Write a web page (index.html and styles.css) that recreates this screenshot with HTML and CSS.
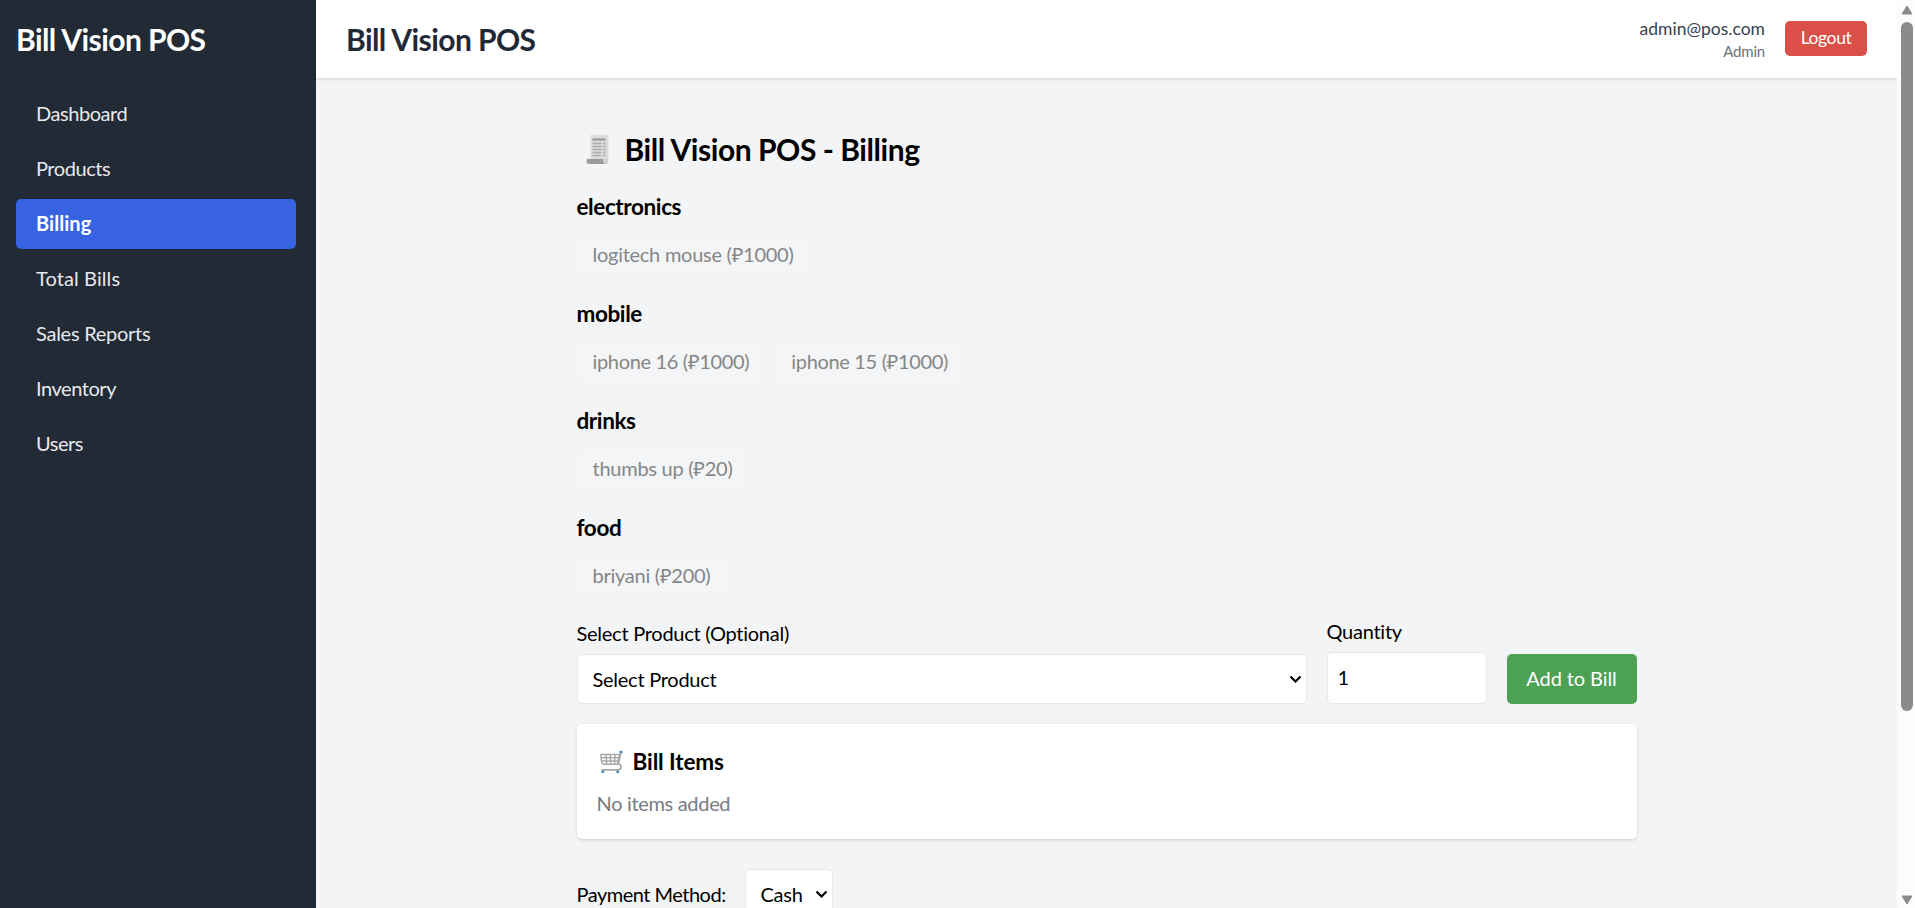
FILE: index.html
```html
<!DOCTYPE html>
<html lang="en">
<head>
<meta charset="utf-8">
<title>Bill Vision POS</title>
<link rel="stylesheet" href="styles.css">
</head>
<body>
<div class="app">
  <aside class="sidebar">
    <div class="brand">Bill Vision POS</div>
    <nav class="nav">
      <a class="tight">Dashboard</a>
      <a class="tight">Products</a>
      <a class="active">Billing</a>
      <a class="loose">Total Bills</a>
      <a>Sales Reports</a>
      <a class="tight">Inventory</a>
      <a class="tight">Users</a>
    </nav>
  </aside>
  <div class="page">
    <header class="topbar">
      <div class="title">Bill Vision POS</div>
      <div class="account">
        <div class="who"><div class="email">admin@pos.com</div><div class="role">Admin</div></div>
        <button class="logout">Logout</button>
      </div>
    </header>
    <main class="content">
      <h1 class="heading">
        <svg class="receipt" width="24" height="31" viewBox="0 0 24 31">
          <path d="M4.500 1.500l1.500-1 1.500 1 1.500-1 1.500 1 1.500-1 1.500 1 1.500-1 1.500 1 1.500-1 1.500 1 1.500-1 1.500 1V28q0 2-2.500 2H4.500z" fill="#dcdcdc"/>
          <path d="M6.500 5.500h13" stroke="#999" stroke-width="2.200"/>
          <path d="M6.500 9.500h9M17 9.500h2.500M6.500 12.500h9M17 12.500h2.500M6.500 15.500h9M17 15.500h2.500M6.500 18.500h9M17 18.500h2.500M6.500 21.500h9M17 21.500h2.500" stroke="#aaa" stroke-width="1.300"/>
          <path d="M1 25h16.500q-1.500 2.500 1.500 5H3Q.5 30 .5 27z" fill="#9b9b9b"/>
          <path d="M17.500 25h4.500v3q0 2-2 2-3-1-2.500-5z" fill="#cfcfcf"/>
        </svg>
        <span>Bill Vision POS - Billing</span>
      </h1>
      <section class="category"><h2>electronics</h2><div class="pills"><button class="pill">logitech mouse (₽1000)</button></div></section>
      <section class="category"><h2>mobile</h2><div class="pills"><button class="pill phone">iphone 16 (₽1000)</button><button class="pill phone">iphone 15 (₽1000)</button></div></section>
      <section class="category"><h2>drinks</h2><div class="pills"><button class="pill">thumbs up (₽20)</button></div></section>
      <section class="category"><h2>food</h2><div class="pills"><button class="pill">briyani (₽200)</button></div></section>
      <div class="form">
        <div class="field product">
          <label>Select Product (Optional)</label>
          <div class="control select"><span>Select Product</span><svg width="13" height="9" viewBox="0 0 13 9"><path d="M1.500 1.500l5 5 5-5" fill="none" stroke="#000" stroke-width="2.200"/></svg></div>
        </div>
        <div class="field quantity">
          <label>Quantity</label>
          <div class="control number">1</div>
        </div>
        <button class="add">Add to Bill</button>
      </div>
      <section class="card">
        <h2 class="card-title">
          <svg width="25" height="24" viewBox="0 0 25 24" fill="none">
            <path d="M2 4.500h18.500l-2.200 9.700H4.500q-1.500 0-1.700-1.500L1.800 6q-.1-1.500.2-1.500zM2.500 7.700h17.500M3 11h16.500M6.800 4.500l1 9.700M11.300 4.500l.5 9.700M16 4.500l-.4 9.700" stroke="#a9a9a9" stroke-width="1.400"/>
            <path d="M22 2.500L19.300 14.200q3 .2 2.700 2.600 0 3-3 3H2.500" stroke="#a9a9a9" stroke-width="1.700"/>
            <path d="M20.500 2h3" stroke="#4387bd" stroke-width="2.200"/>
            <path d="M3.800 20.500v2.500M18.800 20.500v2.500" stroke="#4387bd" stroke-width="2.600"/>
          </svg>
          <span>Bill Items</span>
        </h2>
        <p class="empty">No items added</p>
      </section>
      <div class="payment">
        <label>Payment Method:</label>
        <div class="control select cash"><span>Cash</span><svg width="13" height="9" viewBox="0 0 13 9"><path d="M1.500 1.500l5 5 5-5" fill="none" stroke="#000" stroke-width="2.200"/></svg></div>
      </div>
    </main>
  </div>
  <div class="scrollbar">
    <svg width="12" height="10" viewBox="0 0 12 10"><path d="M6 1L11 9H1z" fill="#8b8b8b" stroke="#8b8b8b" stroke-linejoin="round"/></svg>
    <div class="track"><div class="thumb"></div></div>
    <svg width="12" height="10" viewBox="0 0 12 10"><path d="M6 9L1 1h10z" fill="#8b8b8b" stroke="#8b8b8b" stroke-linejoin="round"/></svg>
  </div>
</div>
</body>
</html>
```
FILE: styles.css
```css
* { box-sizing: border-box; margin: 0; padding: 0; }
body { font-family: Lato, "Noto Sans", sans-serif; font-size: 20px; letter-spacing: -.26px; color: #000; overflow: hidden; }
button { font: inherit; letter-spacing: inherit; border: 0; padding-bottom: 2px; }
.app { display: flex; height: 908px; background: #f3f4f6; }
.sidebar { flex: none; width: 316px; padding: 19px 20px 0 16px; background: #212a35; color: #fff; }
.brand { font-size: 30px; font-weight: 700; line-height: 40px; letter-spacing: -.58px; }
.nav { display: flex; flex-direction: column; gap: 5px; margin-top: 30px; }
.nav a { height: 50px; line-height: 48px; padding-left: 20px; border-radius: 5px; color: #e7e9ec; }
.nav .tight { letter-spacing: -.45px; }
.nav .loose { letter-spacing: .1px; }
.nav .active { background: #3763e3; color: #fff; font-weight: 700; letter-spacing: .05px; line-height: 49px; }
.page { flex: 1; min-width: 0; display: flex; flex-direction: column; }
.topbar { flex: none; display: flex; justify-content: space-between; align-items: center; height: 78px; padding: 0 30px; background: #fff; box-shadow: 0 1px 3px rgba(0,0,0,.15); }
.title { font-size: 30px; font-weight: 700; letter-spacing: -.58px; line-height: 40px; color: #1f2937; }
.account { display: flex; gap: 20px; align-items: center; padding-bottom: 1px; }
.who { text-align: right; }
.email { font-size: 17.5px; line-height: 24px; letter-spacing: 0; color: #374151; }
.role { font-size: 15px; line-height: 20px; letter-spacing: -.2px; color: #6b7280; }
.logout { width: 82px; height: 35px; border-radius: 5px; background: #db4f49; color: #fff; font-size: 17.5px; letter-spacing: -.4px; }
.content { width: 1060px; margin: 0 auto; padding-top: 51px; }
.heading { display: flex; align-items: center; height: 40px; padding-left: 9px; margin-bottom: 23px; font-size: 30px; letter-spacing: -.45px; }
.receipt { margin-right: 15px; }
.category { margin-bottom: 23px; }
.category h2 { font-size: 22.5px; line-height: 30px; margin-bottom: 13px; letter-spacing: -.4px; }
.pills { display: flex; gap: 10px; }
.pill { height: 41px; padding: 0 15px 3px; border: 1px solid #f0f1f3; border-radius: 5px; background: #f4f5f6; color: #858688; }
.phone { letter-spacing: -.33px; }
.form { display: flex; gap: 20px; align-items: flex-end; height: 86px; margin-top: -2px; }
label { display: block; line-height: 28px; }
.field label { line-height: 27px; padding-bottom: 1px; margin-bottom: 6px; }
.product { width: 730px; }
.quantity { width: 160px; }
.control { background: #fff; border: 1px solid #e5e7eb; border-radius: 5px; }
.select { display: flex; align-items: center; justify-content: space-between; height: 50px; padding: 0 4px 0 15px; }
.select span { padding-bottom: 1px; }
.number { height: 52px; line-height: 49px; padding-left: 10px; }
.add { width: 130px; height: 50px; border-radius: 5px; background: #4ca154; color: #fff; letter-spacing: -.1px; }
.card { height: 115px; margin-top: 20px; padding: 20px; border-radius: 5px; background: #fff; box-shadow: 0 1px 3px rgba(0,0,0,.16); }
.card-title { display: flex; align-items: center; gap: 9px; height: 35px; padding-left: 2px; font-size: 22.5px; letter-spacing: -.1px; }
.empty { margin-top: 10px; line-height: 28px; letter-spacing: -.32px; color: #777b82; }
.payment { display: flex; align-items: center; gap: 19px; margin-top: 30px; }
.payment label { width: 149px; white-space: nowrap; letter-spacing: -.5px; padding-bottom: 1px; }
.cash { width: 88px; }
.scrollbar { flex: none; width: 18px; display: flex; flex-direction: column; align-items: center; padding: 5px 0 3px 2px; background: #fcfcfc; }
.track { flex: 1; padding-top: 7px; }
.thumb { width: 12px; height: 689px; border-radius: 6px; background: #8b8b8b; }
```
